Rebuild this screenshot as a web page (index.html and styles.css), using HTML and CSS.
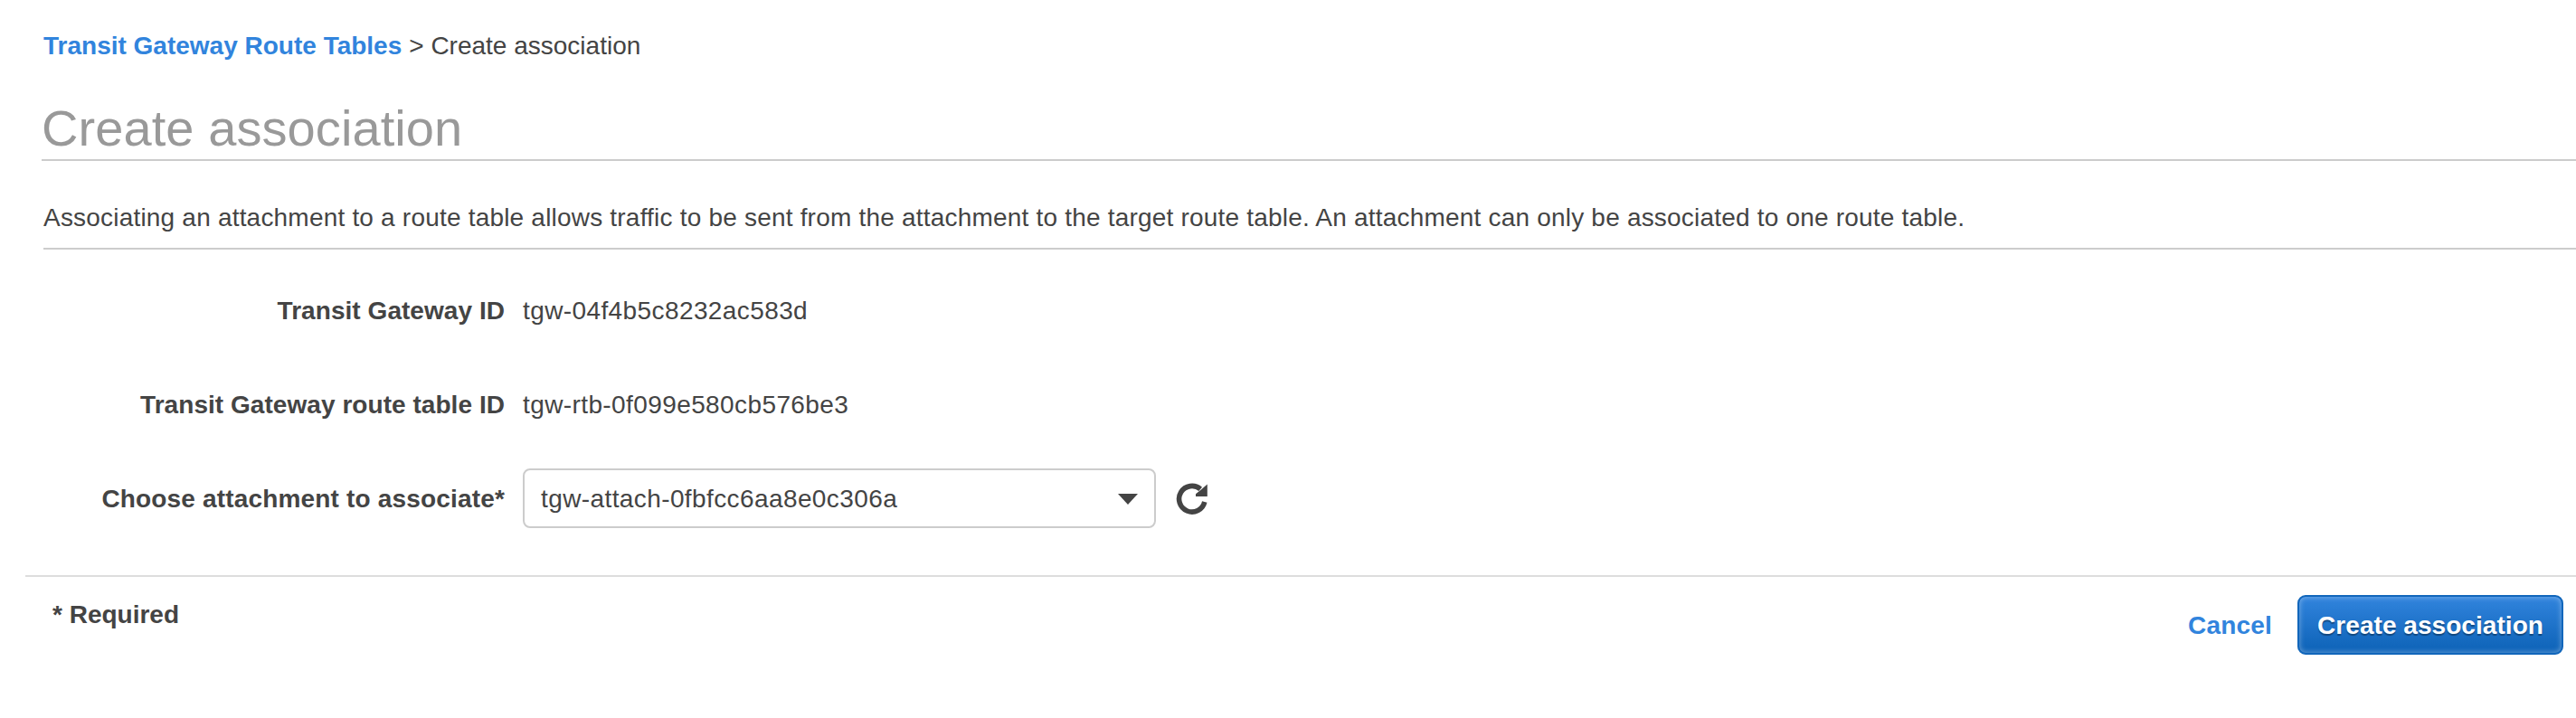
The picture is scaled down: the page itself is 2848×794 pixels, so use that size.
FILE: index.html
```html
<!DOCTYPE html>
<html lang="en">
<head>
  <meta charset="UTF-8">
  <meta name="viewport" content="width=device-width, initial-scale=1.0">
  <title>Create association</title>
  <link rel="stylesheet" href="styles.css">
</head>
<body>
  <div class="breadcrumb">
    <a class="link breadcrumb-link" href="#">Transit Gateway Route Tables</a>
    <span class="breadcrumb-current">&gt; Create association</span>
  </div>

  <h1 class="page-title">Create association</h1>

  <p class="description">Associating an attachment to a route table allows traffic to be sent from the attachment to the target route table. An attachment can only be associated to one route table.</p>

  <div class="form">
    <div class="form-row">
      <div class="form-label">Transit Gateway ID</div>
      <div class="form-value">tgw-04f4b5c8232ac583d</div>
    </div>
    <div class="form-row">
      <div class="form-label">Transit Gateway route table ID</div>
      <div class="form-value">tgw-rtb-0f099e580cb576be3</div>
    </div>
    <div class="form-row">
      <div class="form-label label-attach">Choose attachment to associate*</div>
      <div class="select">
        <span class="form-value">tgw-attach-0fbfcc6aa8e0c306a</span>
        <span class="select-arrow"></span>
      </div>
      <svg class="refresh" width="36" height="38" viewBox="0 0 36 38">
        <path d="M31.8 23A14.3 14.3 0 1 1 27.2 8.9" fill="none" stroke="#444" stroke-width="5.6"/>
        <path d="M34.8 3.5V17H22V14.2L28.2 9.2Z" fill="#444"/>
      </svg>
    </div>
  </div>

  <div class="footer">
    <div class="required">* Required</div>
    <div class="actions">
      <a class="link cancel" href="#">Cancel</a>
      <button class="submit-btn">Create association</button>
    </div>
  </div>
</body>
</html>
```

FILE: styles.css
```css
* {
  box-sizing: border-box;
}

body {
  margin: 0;
  padding-top: 34px;
  background: #fff;
  color: #444;
  font-family: "Helvetica Neue", "Liberation Sans", Arial, sans-serif;
  font-size: 28px;
  line-height: 33px;
  white-space: nowrap;
  overflow: hidden;
}

.link {
  color: #3184dd;
  font-weight: bold;
  text-decoration: none;
}

.breadcrumb {
  display: flex;
  gap: 8px;
  padding-left: 48px;
}

.page-title {
  margin: 43px 0 0 46px;
  height: 68px;
  border-bottom: 2px solid #ccc;
  color: #999;
  font-size: 56px;
  font-weight: normal;
  line-height: 64px;
  letter-spacing: 0.08px;
}

.description {
  margin: 46px 0 0 48px;
  height: 52px;
  border-bottom: 2px solid #ccc;
  letter-spacing: 0.2px;
}

.form {
  padding-top: 15px;
}

.form-row {
  display: flex;
  align-items: center;
  height: 104px;
}

.form-label {
  width: 558px;
  margin-right: 20px;
  padding-top: 1px;
  font-weight: bold;
  text-align: right;
  letter-spacing: 0.05px;
}

.label-attach {
  letter-spacing: 0.17px;
}

.form-value {
  padding-top: 1px;
  letter-spacing: 0.4px;
}

.select {
  display: flex;
  align-items: center;
  justify-content: space-between;
  width: 700px;
  height: 66px;
  padding: 0 18px;
  border: 2px solid #ccc;
  border-radius: 8px;
}

.select-arrow {
  margin-top: 2px;
  border: 11px solid transparent;
  border-top: 12px solid #444;
  border-bottom: 0;
}

.refresh {
  margin-left: 22px;
}

.footer {
  display: flex;
  justify-content: space-between;
  margin: 33px 0 0 28px;
  padding: 20px 14px 0 30px;
  border-top: 2px solid #ddd;
}

.required {
  padding-top: 5px;
  font-weight: bold;
}

.actions {
  display: flex;
  align-items: center;
  gap: 28px;
}

.cancel {
  padding-top: 1px;
  letter-spacing: 0.2px;
}

.submit-btn {
  width: 294px;
  height: 66px;
  padding: 1px 0 0;
  border: 2px solid #1166bb;
  border-radius: 9px;
  background: linear-gradient(#3184dd, #1166bb 88%);
  box-shadow: inset 0 0 6px rgba(255, 255, 255, 0.4);
  color: #fff;
  font: bold 28px/33px "Helvetica Neue", "Liberation Sans", Arial, sans-serif;
  letter-spacing: 0.05px;
  text-shadow: 0 2px 1px rgba(0, 0, 0, 0.35);
}
```
